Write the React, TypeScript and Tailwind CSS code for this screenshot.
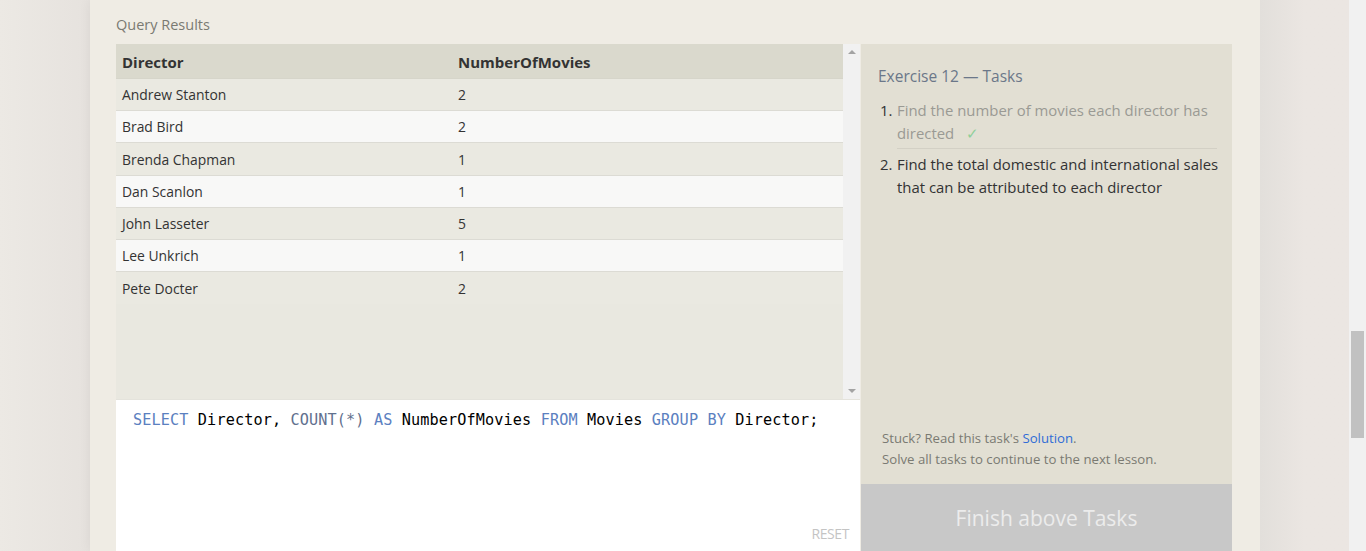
import React from "react";

const rows: [string, string][] = [
  ["Andrew Stanton", "2"],
  ["Brad Bird", "2"],
  ["Brenda Chapman", "1"],
  ["Dan Scanlon", "1"],
  ["John Lasseter", "5"],
  ["Lee Unkrich", "1"],
  ["Pete Docter", "2"],
];

export default function App() {
  return (
    <div
      className="relative h-[551px] w-[1366px] overflow-hidden bg-[#ebe7e2] flex"
      style={{ fontFamily: '"Open Sans", "Noto Sans", sans-serif' }}
    >
      <div className="w-[90px] shrink-0 bg-gradient-to-r from-[#ece9e4] to-[#e6e2de]" />
      <div className="w-[1170px] shrink-0 bg-[#efece4] pl-[26px] pr-[28px] flex flex-col shadow-[0_0_12px_rgba(0,0,0,0.06)]">
        <div className="h-[44px] pt-[15px] text-[14.5px] leading-[20px] text-[#7a7a72]">Query Results</div>
        <div className="flex flex-1 min-h-0">
          <div className="w-[744px] flex flex-col">
            <div className="h-[355px] flex bg-[#e9e8e0]">
              <div className="flex-1 flex flex-col">
                <div className="h-[35px] pt-[2px] bg-[#dad9cd] flex items-center border-b border-[#d6d5ca] text-[15px] font-bold text-[#333]">
                  <div className="w-[342px] pl-[6px]">Director</div>
                  <div>NumberOfMovies</div>
                </div>
                {rows.map(([d, n], i) => (
                  <div
                    key={d}
                    className={`h-[32.2px] pt-[2px] flex items-center text-[13.9px] text-[#333] ${
                      i < rows.length - 1 ? "border-b border-[#dcdbd4]" : ""
                    } ${i % 2 === 1 ? "bg-[#f8f8f7]" : "bg-[#eae9e1]"}`}
                  >
                    <div className="w-[342px] pl-[6px]">{d}</div>
                    <div>{n}</div>
                  </div>
                ))}
              </div>
              <div className="w-[17px] bg-[#f1f1f1] flex flex-col items-center justify-between py-[6px]">
                <div className="w-0 h-0 border-l-[4px] border-r-[4px] border-b-[4px] border-l-transparent border-r-transparent border-b-[#a3a3a3]" />
                <div className="w-0 h-0 border-l-[4px] border-r-[4px] border-t-[4px] border-l-transparent border-r-transparent border-t-[#a3a3a3]" />
              </div>
            </div>
            <div className="flex-1 bg-white border-t border-[#e4e3dc] relative">
              <div
                className="pl-[17px] pt-[9px] text-[15.2px] tracking-[0.12px] leading-[22px] text-black whitespace-pre"
                style={{ fontFamily: '"DejaVu Sans Mono", "Liberation Mono", monospace' }}
              >
                <span className="text-[#5b80c0]">SELECT</span> Director,{" "}
                <span className="text-[#61708e]">COUNT(*)</span>{" "}
                <span className="text-[#5b80c0]">AS</span> NumberOfMovies{" "}
                <span className="text-[#5b80c0]">FROM</span> Movies{" "}
                <span className="text-[#5b80c0]">GROUP BY</span> Director;
              </div>
              <div className="absolute right-[11px] bottom-[7px] text-[14px] text-[#c4c4c4] tracking-[-0.4px]">RESET</div>
            </div>
          </div>
          <div className="w-[371px] ml-[1px] flex flex-col bg-[#e2dfd3]">
            <div className="flex-1 pl-[17px] pr-[8px] pt-[21px] flex flex-col">
              <div className="text-[15.5px] leading-[22px] text-[#6b7789]">Exercise 12 — Tasks</div>
              <ol className="mt-[12px] text-[14.9px] leading-[23px]">
                <li className="flex">
                  <span className="w-[19px] pl-[2px] text-[#333]">1.</span>
                  <div className="flex-1 mr-[7px] text-[#9a9a94] border-b border-[#d3d0c5] pb-[3px]">
                    Find the number of movies each director has directed
                    <span className="ml-[12px] text-[#8fcf9a]">✓</span>
                  </div>
                </li>
                <li className="flex mt-[4px]">
                  <span className="w-[19px] pl-[2px] text-[#333]">2.</span>
                  <div className="flex-1 text-[#333]">
                    Find the total domestic and international sales that can be attributed to each director
                  </div>
                </li>
              </ol>
              <div className="mt-auto pl-[4px] pb-[14px] text-[13.2px] leading-[21px] text-[#7a7a72]">
                <div>
                  Stuck? Read this task's <span className="text-[#2f6cd6]">Solution</span>.
                </div>
                <div>Solve all tasks to continue to the next lesson.</div>
              </div>
            </div>
            <div className="h-[67px] pt-[3px] bg-[#c8c8c8] flex items-center justify-center text-[21px] text-[#ececec]">
              Finish above Tasks
            </div>
          </div>
        </div>
      </div>
      <div className="w-[89px] shrink-0 bg-gradient-to-r from-[#e2dfdb] via-[#ebe6e2] to-[#ebe6e2]" />
      <div className="w-[17px] shrink-0 bg-[#f1f1f1] relative">
        <div className="absolute left-[2px] right-[2px] top-[331px] h-[107px] bg-[#c1c1c1]" />
      </div>
    </div>
  );
}
